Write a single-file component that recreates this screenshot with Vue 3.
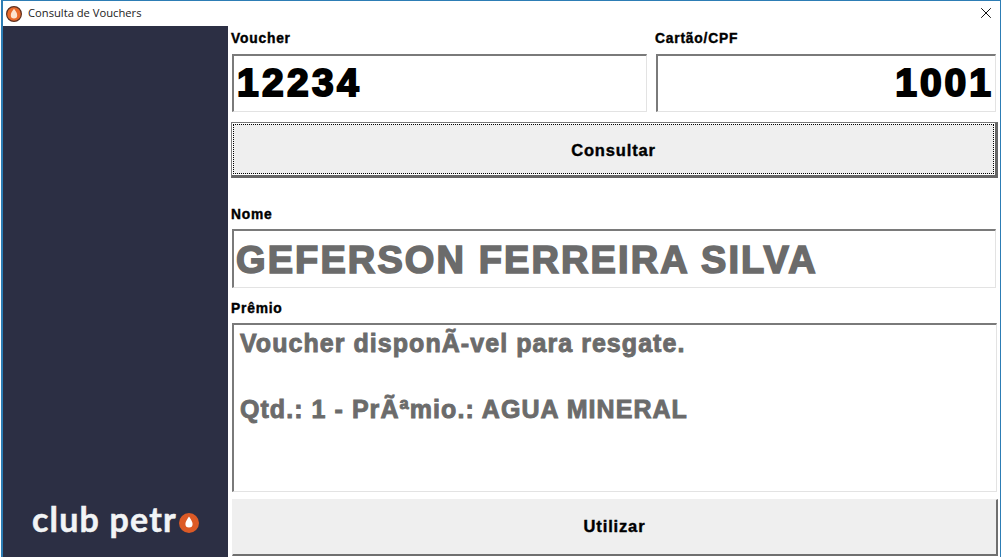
<template>
  <div class="window">
    <header class="titlebar">
      <svg class="app-icon" width="16" height="16" viewBox="0 0 16 16">
        <circle cx="8" cy="8" r="7.4" fill="#ea6a2a" stroke="#5c3020" stroke-width="1.2" />
        <path d="M8 2.8C9.8 5.4 11.2 7 11.2 9.2A3.2 3.2 0 0 1 4.8 9.2C4.8 7 6.2 5.4 8 2.8Z" fill="#fde3cf" />
      </svg>
      <span class="title">Consulta de Vouchers</span>
      <svg class="close" width="10" height="10" viewBox="0 0 10 10">
        <path d="M0.2 0.2L9.8 9.8M9.8 0.2L0.2 9.8" stroke="#111" stroke-width="1" fill="none" />
      </svg>
    </header>

    <div class="body">
      <aside class="sidebar">
        <div class="logo">
          <span class="logo-text">club petr</span>
          <svg class="logo-drop" width="20" height="20" viewBox="0 0 20 20">
            <circle cx="10" cy="10" r="10" fill="#dc5a26" />
            <path d="M10 3.6C11.8 6.6 13.6 8.6 13.6 11A3.6 3.6 0 0 1 6.4 11C6.4 8.6 8.2 6.6 10 3.6Z" fill="#fff" />
          </svg>
        </div>
      </aside>

      <main class="content">
        <div class="top-row">
          <div class="field voucher">
            <label>Voucher</label>
            <input class="big" :value="voucher" readonly />
          </div>
          <div class="field card">
            <label>Cartão/CPF</label>
            <input class="big right" :value="card" readonly />
          </div>
        </div>

        <button class="btn focused"><span>Consultar</span></button>

        <div class="field name">
          <label>Nome</label>
          <input class="big grey" :value="name" readonly />
        </div>

        <div class="field prize">
          <label>Prêmio</label>
          <textarea class="grey" :value="prize" readonly></textarea>
        </div>

        <button class="btn use"><span>Utilizar</span></button>
      </main>
    </div>
  </div>
</template>

<script setup>
const voucher = '12234'
const card = '1001'
const name = 'GEFERSON FERREIRA SILVA'
const prize = 'Voucher disponÃ-vel para resgate.\n\nQtd.: 1 - PrÃªmio.: AGUA MINERAL'
</script>

<style>
html, body {
  margin: 0;
  overflow: hidden;
  background: #fff;
}
</style>

<style scoped>
.window {
  height: 557px;
  box-sizing: border-box;
  margin: 0 1px;
  border: 1px solid #2d7db5;
  border-width: 1px 1px 0 2px;
  display: flex;
  flex-direction: column;
  font-family: "Liberation Sans", Arial, sans-serif;
  background: #fff;
}

.titlebar {
  height: 25px;
  flex: none;
  display: flex;
  align-items: center;
  padding: 0 9px 2px 3px;
  box-sizing: border-box;
}

.app-icon {
  margin: 2px 6px 0 0;
}

.title {
  font-family: "Open Sans", sans-serif;
  font-size: 11.2px;
  color: #222;
}

.close {
  margin-left: auto;
}

.body {
  flex: 1;
  display: flex;
  min-height: 0;
}

.sidebar {
  width: 225px;
  flex: none;
  background: #2c2f44;
  display: flex;
  flex-direction: column;
  justify-content: flex-end;
}

.logo {
  display: flex;
  align-items: center;
  padding: 0 0 20px 29px;
}

.logo-text {
  font-family: Lato, sans-serif;
  font-weight: 700;
  font-size: 34px;
  line-height: 36px;
  letter-spacing: 1.2px;
  color: #f2f4f6;
  -webkit-text-stroke: 0.5px #f2f4f6;
}

.logo-drop {
  margin: 8px 0 0 2px;
}

.content {
  flex: 1;
  min-width: 0;
  padding: 5px 3px 0 3px;
  display: flex;
  flex-direction: column;
}

.top-row {
  display: flex;
  gap: 8px;
}

.voucher {
  width: 416px;
}

.card {
  width: 341px;
}

.card input {
  width: 340px;
}

.field {
  display: flex;
  flex-direction: column;
}

label {
  font-size: 13.8px;
  font-weight: 700;
  line-height: 16px;
  height: 23px;
  color: #000;
  letter-spacing: 0.8px;
  -webkit-text-stroke: 0.4px #000;
}

input,
textarea {
  box-sizing: border-box;
  margin-left: 1px;
  border-style: solid;
  border-color: #7a7a7a #e3e3e3 #e3e3e3 #7a7a7a;
  border-width: 2px 1px 1px 2px;
  background: #fff;
  outline: none;
  font-family: "Liberation Sans", Arial, sans-serif;
  font-weight: 700;
  color: #000;
}

.big {
  height: 58px;
  padding: 0 3px 1px;
  font-size: 39px;
  letter-spacing: 3.3px;
  -webkit-text-stroke: 2px currentColor;
}

.right {
  padding-right: 1px;
  text-align: right;
  letter-spacing: 3px;
}

.grey {
  color: #6b6b6b;
}

.name label {
  height: 22px;
}

.name .big {
  height: 59px;
  padding: 3px 3px 0 2px;
  font-size: 38px;
  letter-spacing: 2.1px;
  -webkit-text-stroke: 1.6px currentColor;
}

.btn {
  flex: none;
  box-sizing: border-box;
  display: block;
  width: 767px;
  padding: 1px;
  background: #efefef;
  border-style: solid;
  border-color: #7a7a7a #666 #666 #7a7a7a;
  font-family: "Liberation Sans", Arial, sans-serif;
  font-size: 16.5px;
  font-weight: 700;
  color: #000;
  letter-spacing: 0.85px;
}

.btn span {
  display: flex;
  align-items: center;
  justify-content: center;
  height: 100%;
  box-sizing: border-box;
  -webkit-text-stroke: 0.4px #000;
}

.focused {
  height: 56px;
  margin-top: 10px;
  border-width: 1px 3px 3px 1px;
  box-shadow: inset 0 0 0 1px #fff;
}

.focused span {
  border: 1px dotted #000;
  padding-top: 3px;
}

.name {
  margin-top: 29px;
}

.name input {
  width: 764px;
}

.prize {
  margin-top: 13px;
}

.prize label {
  height: 22px;
}

textarea {
  width: 765px;
  height: 169px;
  padding: 2px 6px;
  resize: none;
  overflow: hidden;
  font-size: 25px;
  line-height: 33px;
  letter-spacing: 1.05px;
  -webkit-text-stroke: 0.9px currentColor;
}

.use {
  height: 57px;
  margin-top: 7px;
  margin-left: 1px;
  width: 766px;
  border-width: 1px 2px 2px 1px;
  border-color: #efefef #6f6f6f #6f6f6f #efefef;
}

.use span {
  padding-bottom: 2px;
}
</style>
